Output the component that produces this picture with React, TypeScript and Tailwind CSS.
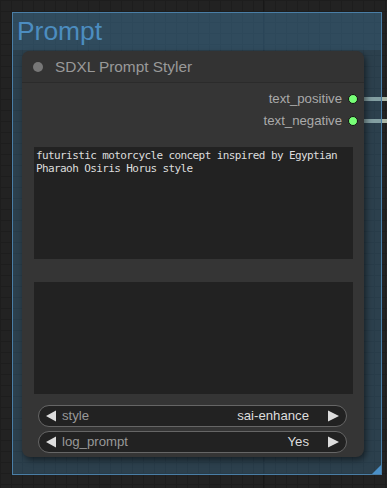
import React from "react";

const sans = { fontFamily: '"Liberation Sans", Arial, sans-serif' };

function Combo({ label, value }: { label: string; value: string }) {
  return (
    <div
      className="flex h-[22px] items-center rounded-full border border-[#666] bg-[#222] pl-[6px] pr-[6px] text-[13.2px]"
      style={sans}
    >
      <svg width="10" height="12" viewBox="0 0 10 12" className="ml-[1px]">
        <polygon points="10,0.5 10,11.5 0,6" fill="#ddd" />
      </svg>
      <span className="ml-[6px] text-[#999]">{label}</span>
      <span className="ml-auto text-[#ddd]">{value}</span>
      <svg width="11" height="12" viewBox="0 0 11 12" className="ml-[19px] mr-[1px]">
        <polygon points="0,0.5 0,11.5 11,6" fill="#ddd" />
      </svg>
    </div>
  );
}

function Output({ name }: { name: string }) {
  return (
    <div className="flex h-[22px] items-center justify-end pr-[6px]">
      <span className="text-[13.2px] leading-none text-[#aaa]" style={sans}>
        {name}
      </span>
      <span className="ml-[6px] h-[10px] w-[10px] rounded-full border border-[#111] bg-[#7f7]" />
    </div>
  );
}

export default function App() {
  return (
    <div className="relative h-[488px] w-[387px] overflow-hidden bg-[#222] bg-[linear-gradient(#1d1d1d_1px,transparent_1px),linear-gradient(90deg,#1d1d1d_1px,transparent_1px)] bg-[size:11px_11px]">
      {/* major grid line */}
      <div className="absolute left-[263px] top-0 h-full w-px bg-[#181818]" />

      {/* links */}
      <div className="absolute left-[358px] top-[97px] h-[4px] w-[40px] rounded-l bg-[#a8b4a5]" />
      <div className="absolute left-[358px] top-[119px] h-[4px] w-[40px] rounded-l bg-[#a8b4a5]" />

      {/* group */}
      <div className="absolute left-[12px] top-[12px] flex h-[463px] w-[370px] flex-col border border-[#4a7ea6] bg-[#3f789e]/35">
        <div className="flex h-[37px] items-center bg-[#3f789e]/20 pl-[4px]">
          <span className="text-[26.4px] leading-none text-[#4c8dc0]" style={sans}>
            Prompt
          </span>
        </div>
        <div className="flex-1" />
        <div className="absolute bottom-0 right-0 h-0 w-0 border-b-[9px] border-l-[9px] border-b-[#4a90c8] border-l-transparent" />
      </div>

      {/* node */}
      <div className="absolute left-[22px] top-[51px] flex h-[406px] w-[342px] flex-col overflow-hidden rounded-[8px] bg-[#353535] shadow-[2px_3px_6px_rgba(0,0,0,0.5)]">
        <div className="flex h-[32px] items-center border-b border-[#2b2b2b] bg-[#333] pl-[11px]">
          <span className="h-[10px] w-[10px] rounded-full bg-[#777]" />
          <span className="ml-[12px] text-[15.4px] leading-none text-[#999]" style={sans}>
            SDXL Prompt Styler
          </span>
        </div>
        <div className="flex flex-col pt-[5px]">
          <Output name="text_positive" />
          <Output name="text_negative" />
        </div>
        <div className="mt-[15px] flex flex-col gap-[23px] pl-[12px] pr-[11px]">
          <div
            className="h-[112px] bg-[#222] px-[2px] pt-[2px] text-[11px] leading-[13px] tracking-[-0.6px] text-[#ddd]"
            style={{ fontFamily: '"DejaVu Sans Mono", monospace' }}
          >
            futuristic motorcycle concept inspired by Egyptian
            <br />
            Pharaoh Osiris Horus style
          </div>
          <div className="h-[112px] bg-[#222]" />
        </div>
        <div className="mt-[11px] flex flex-col gap-[4px] pl-[16px] pr-[17px]">
          <Combo label="style" value="sai-enhance" />
          <Combo label="log_prompt" value="Yes" />
        </div>
      </div>
    </div>
  );
}
